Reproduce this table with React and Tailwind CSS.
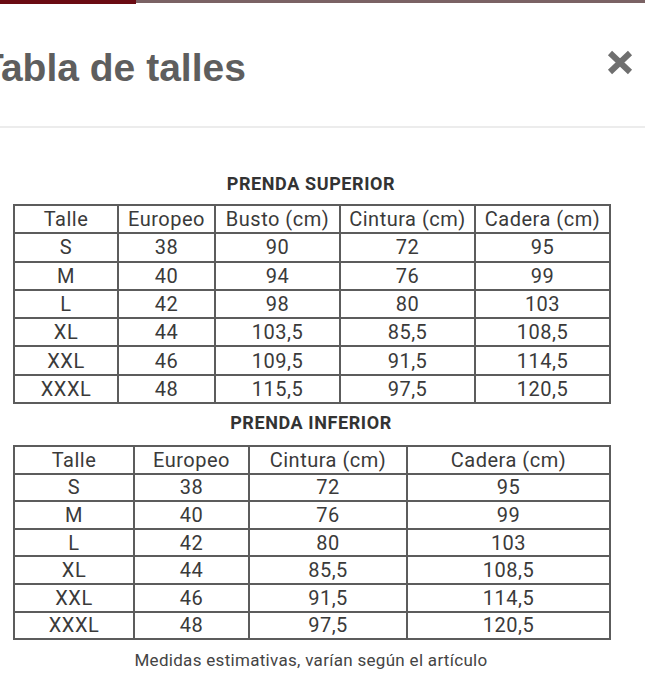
const superior = {
  head: ["Talle", "Europeo", "Busto (cm)", "Cintura (cm)", "Cadera (cm)"],
  cols: [104, 97, 125, 135, 135],
  rows: [
    ["S", "38", "90", "72", "95"],
    ["M", "40", "94", "76", "99"],
    ["L", "42", "98", "80", "103"],
    ["XL", "44", "103,5", "85,5", "108,5"],
    ["XXL", "46", "109,5", "91,5", "114,5"],
    ["XXXL", "48", "115,5", "97,5", "120,5"],
  ],
};

const inferior = {
  head: ["Talle", "Europeo", "Cintura (cm)", "Cadera (cm)"],
  cols: [120, 115, 158, 203],
  rows: [
    ["S", "38", "72", "95"],
    ["M", "40", "76", "99"],
    ["L", "42", "80", "103"],
    ["XL", "44", "85,5", "108,5"],
    ["XXL", "46", "91,5", "114,5"],
    ["XXXL", "48", "97,5", "120,5"],
  ],
};

function SizeTable({ data, rowH }) {
  return (
    <table className="w-[596px] table-fixed border-collapse text-[20px] leading-none tracking-[0.5px] text-[#3a3a3a]">
      <colgroup>
        {data.cols.map((w, i) => (
          <col key={i} style={{ width: w }} />
        ))}
      </colgroup>
      <thead>
        <tr className={rowH}>
          {data.head.map((h) => (
            <th key={h} className="border-2 border-[#5c5c5c] p-0 text-center align-middle font-normal">
              {h}
            </th>
          ))}
        </tr>
      </thead>
      <tbody>
        {data.rows.map((r) => (
          <tr key={r[0]} className={rowH}>
            {r.map((c, i) => (
              <td key={i} className="border-2 border-[#5c5c5c] p-0 text-center align-middle">
                {c}
              </td>
            ))}
          </tr>
        ))}
      </tbody>
    </table>
  );
}

export default function App() {
  return (
    <div className="w-[645px] h-[684px] overflow-hidden bg-white">
      <div className="flex items-start">
        <div className="w-[136px] h-[4px] bg-[#6a0b12]" />
        <div className="flex-1 h-[3px] bg-[#7a6264]" />
      </div>

      <div className="flex items-start justify-between h-[124px] border-b-2 border-[#ececec]">
        <h1 className="mt-[44px] -ml-[20px] text-[39px] leading-[39px] font-bold text-[#5e5e5e] font-['Liberation_Sans',Arial,sans-serif]">
          Tabla de talles
        </h1>
        <svg className="mt-[46px] mr-[12px]" width="26" height="25" viewBox="0 0 26 25">
          <path d="M3 3 L23 22 M23 3 L3 22" stroke="#6f6f6f" strokeWidth="6" fill="none" />
        </svg>
      </div>

      <div className="ml-[13px] w-[596px] font-['Roboto',sans-serif]">
        <p className="mt-[46px] text-center text-[18px] leading-[20px] tracking-[0.6px] font-bold text-[#333]">
          PRENDA SUPERIOR
        </p>
        <div className="mt-[10px]">
          <SizeTable data={superior} rowH="h-[28.3px]" />
        </div>
        <p className="mt-[9px] text-center text-[18px] leading-[20px] tracking-[0.6px] font-bold text-[#333]">
          PRENDA INFERIOR
        </p>
        <div className="mt-[12px]">
          <SizeTable data={inferior} rowH="h-[27.6px]" />
        </div>
        <p className="mt-[10px] text-center text-[17px] leading-[20px] tracking-[0.3px] text-[#444]">
          Medidas estimativas, varían según el artículo
        </p>
      </div>
    </div>
  );
}
